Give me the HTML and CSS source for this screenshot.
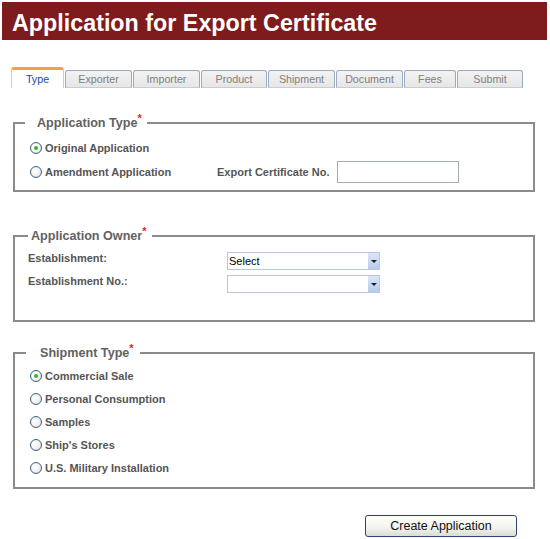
FILE: index.html
```html
<!DOCTYPE html>
<html>
<head>
<meta charset="utf-8">
<title>Application for Export Certificate</title>
<link rel="stylesheet" href="styles.css">
</head>
<body>
<div class="header">Application for Export Certificate</div>
<div class="tabs">
  <div class="tab active t-type">Type</div>
  <div class="tab t-wide">Exporter</div>
  <div class="tab t-wide">Importer</div>
  <div class="tab t-mid">Product</div>
  <div class="tab t-wide">Shipment</div>
  <div class="tab t-wide">Document</div>
  <div class="tab t-fees">Fees</div>
  <div class="tab t-mid">Submit</div>
</div>
<form class="form">
  <fieldset class="fs fs-type">
    <legend class="lg lg-type">Application Type<sup class="req">*</sup></legend>
    <div class="row row-first">
      <span class="radio checked"></span><span class="opt">Original Application</span>
    </div>
    <div class="row row-amend">
      <span class="radio"></span><span class="opt opt-amend">Amendment Application</span>
      <span class="lbl">Export Certificate No.</span>
      <input class="text" type="text">
    </div>
  </fieldset>

  <fieldset class="fs fs-owner">
    <legend class="lg lg-owner">Application Owner<sup class="req">*</sup></legend>
    <div class="grid">
      <span class="lbl">Establishment:</span>
      <div class="select"><span class="sel-text">Select</span><span class="arrow"></span></div>
      <span class="lbl">Establishment No.:</span>
      <div class="select"><span class="sel-text"></span><span class="arrow"></span></div>
    </div>
  </fieldset>

  <fieldset class="fs fs-ship">
    <legend class="lg lg-ship">Shipment Type<sup class="req">*</sup></legend>
    <div class="row row-ship"><span class="radio checked"></span><span class="opt">Commercial Sale</span></div>
    <div class="row row-ship"><span class="radio"></span><span class="opt">Personal Consumption</span></div>
    <div class="row row-ship"><span class="radio"></span><span class="opt">Samples</span></div>
    <div class="row row-ship"><span class="radio"></span><span class="opt">Ship's Stores</span></div>
    <div class="row row-ship"><span class="radio"></span><span class="opt">U.S. Military Installation</span></div>
  </fieldset>

  <div class="actions">
    <button class="btn" type="button">Create Application</button>
  </div>
</form>
</body>
</html>
```

FILE: styles.css
```css
html, body {
  margin: 0;
  padding: 0;
  background: #ffffff;
}
body {
  width: 550px;
  font-family: "Liberation Sans", Arial, sans-serif;
}
.header {
  margin: 2px 3px 0 2px;
  height: 34px;
  padding: 4px 0 0 10px;
  line-height: 34px;
  background: #7e1b1c;
  color: #ffffff;
  font-weight: bold;
  font-size: 23.3px;
}
.tabs {
  display: flex;
  align-items: flex-end;
  padding-left: 11px;
  margin-top: 27px;
  height: 21px;
}
.tab {
  box-sizing: border-box;
  height: 18px;
  margin-right: 1px;
  border: 1px solid #98acc0;
  border-bottom: 1px solid #c9cdd2;
  border-radius: 3px 3px 0 0;
  background: linear-gradient(#f3f3f3, #e6e6e6);
  color: #808080;
  font-size: 10.7px;
  line-height: 16px;
  text-align: center;
}
.tab.active {
  height: 21px;
  border: 1px solid #c9ccd0;
  border-top: 3px solid #f2a33a;
  border-bottom: none;
  background: #ffffff;
  color: #2546a8;
  line-height: 18px;
}
.t-type { width: 53px; }
.t-wide { width: 67px; }
.t-mid { width: 66px; }
.t-fees { width: 52px; }

.form {
  margin: 0;
  padding: 0;
}
.fs {
  margin: 27px 15px 0 13px;
  padding: 7px 0 6px 0;
  border: 2px solid #8b8b8b;
  min-width: 0;
}
.fs-owner {
  margin-top: 36px;
  padding: 7px 0 23px 0;
}
.fs-ship {
  margin-top: 23px;
  padding: 3px 0 8px 0;
}
.lg {
  font-size: 12.6px;
  font-weight: bold;
  color: #626262;
  line-height: 16px;
}
.lg-type { margin-left: 10px; padding: 0 5px 0 12px; }
.lg-owner { margin-left: 13px; padding: 0 5px 0 3px; }
.lg-ship { margin-left: 11px; padding: 0 6px 0 14px; }
.req {
  color: #e52222;
  font-size: 11px;
  vertical-align: top;
  line-height: 10px;
  position: relative;
  top: -2px;
}
.row {
  display: flex;
  align-items: center;
  padding-left: 15px;
}
.row-first { height: 20px; margin-bottom: 2px; }
.row-amend { height: 24px; }
.row-ship { height: 23px; }
.radio {
  box-sizing: border-box;
  flex: none;
  width: 12px;
  height: 12px;
  border: 1px solid #3a5f88;
  border-radius: 50%;
  background: radial-gradient(circle at 35% 35%, #ffffff 0%, #f1f1ec 55%, #d6d6cc 100%);
  margin-right: 3px;
  position: relative;
}
.radio.checked::after {
  content: "";
  position: absolute;
  left: 3px;
  top: 3px;
  width: 4px;
  height: 4px;
  border-radius: 50%;
  background: #35b52a;
}
.opt {
  font-size: 11px;
  font-weight: bold;
  color: #555555;
}
.opt-amend {
  width: 172px;
}
.lbl {
  font-size: 11px;
  font-weight: bold;
  color: #555555;
  line-height: 14px;
}
.text {
  box-sizing: border-box;
  width: 122px;
  height: 22px;
  margin: 0 0 0 8px;
  border: 1px solid #a7adb5;
  background: #ffffff;
  padding: 0;
}
.grid {
  display: grid;
  grid-template-columns: 199px 153px;
  grid-auto-rows: 23px;
  align-items: start;
  padding-left: 13px;
}
.select {
  box-sizing: border-box;
  margin-top: 1px;
  height: 18px;
  border: 1px solid #b5c7e3;
  background: #ffffff;
  display: flex;
  align-items: stretch;
}
.sel-text {
  flex: 1;
  font-size: 11px;
  color: #000000;
  line-height: 16px;
  padding-left: 1px;
}
.arrow {
  width: 11px;
  background: linear-gradient(#dbe6f7, #b7cbea);
  position: relative;
}
.arrow::after {
  content: "";
  position: absolute;
  left: 3px;
  top: 7px;
  border-left: 3px solid transparent;
  border-right: 3px solid transparent;
  border-top: 3px solid #1e1e1e;
}
.actions {
  display: flex;
  justify-content: flex-end;
  margin-top: 26px;
  padding-right: 33px;
}
.btn {
  box-sizing: border-box;
  width: 152px;
  height: 22px;
  border: 1px solid #2b4572;
  border-radius: 3px;
  background: linear-gradient(#ffffff, #f2f2ee 60%, #dcdcd4);
  font-family: "Liberation Sans", Arial, sans-serif;
  font-size: 12.5px;
  color: #111111;
  padding: 0;
}
```
